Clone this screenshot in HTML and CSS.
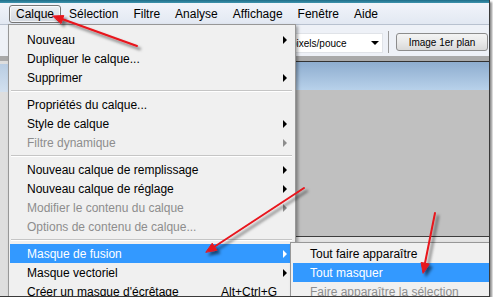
FILE: index.html
```html
<!DOCTYPE html>
<html lang="fr">
<head>
    <meta charset="UTF-8">
    <title>Calque - Masque de fusion</title>
    <link rel="stylesheet" href="styles.css">
</head>
<body>

<div class="screen">
    <div class="titlebar"></div>

    <div class="menubar">
        <span class="mb-item active">Calque</span>
        <span class="mb-item">Sélection</span>
        <span class="mb-item">Filtre</span>
        <span class="mb-item">Analyse</span>
        <span class="mb-item">Affichage</span>
        <span class="mb-item">Fenêtre</span>
        <span class="mb-item">Aide</span>
    </div>

    <div class="toolbar">
        <div class="unit-select">
            <span>pixels/pouce</span>
            <i class="caret"></i>
        </div>
        <div class="tb-sep"></div>
        <button class="tb-btn">Image 1er plan</button>
    </div>

    <div class="workspace">
        <div class="side-panel">
            <div class="side-blue"></div>
        </div>
        <div class="doc">
            <div class="doc-title"></div>
            <div class="doc-canvas"></div>
        </div>
    </div>

    <!-- Menu Calque -->
    <div class="menu main-menu">
        <div class="item">Nouveau<span class="arrow"></span></div>
        <div class="item">Dupliquer le calque...</div>
        <div class="item">Supprimer<span class="arrow"></span></div>
        <div class="sep"></div>
        <div class="item">Propriétés du calque...</div>
        <div class="item">Style de calque<span class="arrow"></span></div>
        <div class="item disabled">Filtre dynamique<span class="arrow"></span></div>
        <div class="sep"></div>
        <div class="item">Nouveau calque de remplissage<span class="arrow"></span></div>
        <div class="item">Nouveau calque de réglage<span class="arrow"></span></div>
        <div class="item disabled">Modifier le contenu du calque<span class="arrow"></span></div>
        <div class="item disabled">Options de contenu de calque...</div>
        <div class="sep"></div>
        <div class="item selected">Masque de fusion<span class="arrow"></span></div>
        <div class="item">Masque vectoriel<span class="arrow"></span></div>
        <div class="item">Créer un masque d'écrêtage<span class="shortcut">Alt+Ctrl+G</span></div>
    </div>

    <!-- Sous-menu Masque de fusion -->
    <div class="menu sub-menu">
        <div class="item">Tout faire apparaître</div>
        <div class="item selected">Tout masquer</div>
        <div class="item disabled">Faire apparaître la sélection</div>
    </div>

    <svg class="arrows" width="489" height="296" viewBox="0 0 489 296">
        <defs>
            <filter id="shade" x="-20%" y="-20%" width="140%" height="140%">
                <feDropShadow dx="3" dy="3" stdDeviation="1.6" flood-color="#000" flood-opacity="0.55"/>
            </filter>
        </defs>
        <g filter="url(#shade)" stroke="#e8141c" stroke-width="2" fill="#e8141c" stroke-linecap="round">
            <line x1="137" y1="46" x2="62" y2="19"/>
            <polygon points="53,16 63.8,15.6 61.1,23.2" stroke-width="1"/>
            <line x1="304" y1="188" x2="214" y2="247"/>
            <polygon points="206,252 212.2,243.2 216.6,249.9" stroke-width="1"/>
            <line x1="435" y1="213" x2="425" y2="263"/>
            <polygon points="423,273 421.1,262.4 428.9,264" stroke-width="1"/>
        </g>
    </svg>
</div>

</body>
</html>
```

FILE: styles.css
```css
body {
    margin: 0;
    background-color: #ffffff;
    font-family: "Liberation Sans", Arial, sans-serif;
}
.screen {
    position: relative;
    width: 489px;
    height: 296px;
    overflow: hidden;
    background-color: #e4e4e4;
    border-right: 1px solid #3a3a3a;
    border-bottom: 1px solid #3a3a3a;
    box-shadow: 2px 2px 2px rgba(0,0,0,0.45);
}
.titlebar {
    height: 3px;
    background: linear-gradient(to bottom, #1d6d88, #3e93ad);
}
.menubar {
    display: flex;
    align-items: center;
    gap: 1px;
    height: 21px;
    padding-left: 9px;
    background: linear-gradient(to bottom, #f1f4fa, #e2e8f2);
    font-size: 12px;
    color: #000;
}
.mb-item {
    padding: 0 6px;
    height: 18px;
    line-height: 17px;
    box-sizing: border-box;
    border: 1px solid transparent;
}
.mb-item.active {
    border-color: #767676;
    border-radius: 3px;
    background: linear-gradient(to bottom, #eef0f3, #d2d7de);
    box-shadow: inset 0 0 0 1px rgba(255,255,255,0.7);
}
.toolbar {
    display: flex;
    align-items: flex-start;
    justify-content: flex-end;
    height: 32px;
    padding: 8px 1px 0 0;
    box-sizing: border-box;
    border-top: 1px solid #b8c1cf;
    background-color: #eef1f7;
    font-size: 10px;
}
.unit-select {
    display: flex;
    align-items: center;
    width: 96px;
    height: 20px;
    padding-left: 3px;
    box-sizing: border-box;
    background-color: #fff;
    border: 1px solid #e0e3e8;
}
.unit-select span {
    flex: 1;
    padding-top: 1px;
}
.caret {
    width: 0;
    height: 0;
    margin-right: 3px;
    border-left: 4px solid transparent;
    border-right: 4px solid transparent;
    border-top: 4px solid #000;
}
.tb-sep {
    width: 1px;
    height: 22px;
    margin: -2px 7px 0 5px;
    background-color: #9a9a9a;
}
.tb-btn {
    width: 92px;
    height: 18px;
    padding: 0;
    border: 1px solid #8c8c8c;
    border-radius: 3px;
    background: linear-gradient(to bottom, #f4f4f4 0%, #e9e9e9 50%, #d9d9d9 100%);
    font-family: "Liberation Sans", Arial, sans-serif;
    font-size: 10px;
    color: #000;
}
.workspace {
    display: flex;
    height: 240px;
    border-top: 5px solid #a9a9a9;
}
.side-panel {
    width: 8px;
    background-color: #dedede;
    padding-top: 3px;
}
.side-blue {
    height: 28px;
    background: linear-gradient(to bottom, #b9cde3, #d2e0ef);
}
.doc {
    flex: 1;
    margin-left: 280px;
    border-left: 2px solid #555;
    border-top: 1px solid #333;
}
.doc-title {
    height: 28px;
    background: linear-gradient(to bottom, #8eadcf, #b8d1ea);
}
.doc-canvas {
    height: 146px;
    background-color: #c0c0c0;
    border-bottom: 1px solid #3d3d3d;
}
.menu {
    position: absolute;
    box-sizing: border-box;
    background-color: #f0f0f0;
    border: 1px solid #979797;
    box-shadow: 2px 2px 3px rgba(0,0,0,0.35);
    font-size: 12px;
}
.main-menu {
    left: 8px;
    top: 24px;
    width: 288px;
    height: 290px;
    padding: 5px 3px 0 1px;
}
.sub-menu {
    left: 290px;
    top: 242px;
    width: 210px;
    height: 80px;
    padding: 1px 0 0 2px;
}
.item {
    display: flex;
    align-items: center;
    height: 19px;
    padding-left: 17px;
    color: #000;
    white-space: nowrap;
}
.item.disabled {
    color: #8d8d8d;
}
.item.selected {
    background-color: #3399ff;
    color: #fff;
}
.arrow {
    margin-left: auto;
    margin-right: 5px;
    width: 0;
    height: 0;
    border-top: 4px solid transparent;
    border-bottom: 4px solid transparent;
    border-left: 4px solid #000;
}
.item.disabled .arrow {
    border-left-color: #8d8d8d;
}
.item.selected .arrow {
    border-left-color: #fff;
}
.shortcut {
    margin-left: auto;
    margin-right: 15px;
}
.sep {
    height: 1px;
    margin: 3px 0 3px 1px;
    background-color: #c5c5c5;
    border-bottom: 1px solid #fff;
}
.arrows {
    position: absolute;
    left: 0;
    top: 0;
    pointer-events: none;
}
```
